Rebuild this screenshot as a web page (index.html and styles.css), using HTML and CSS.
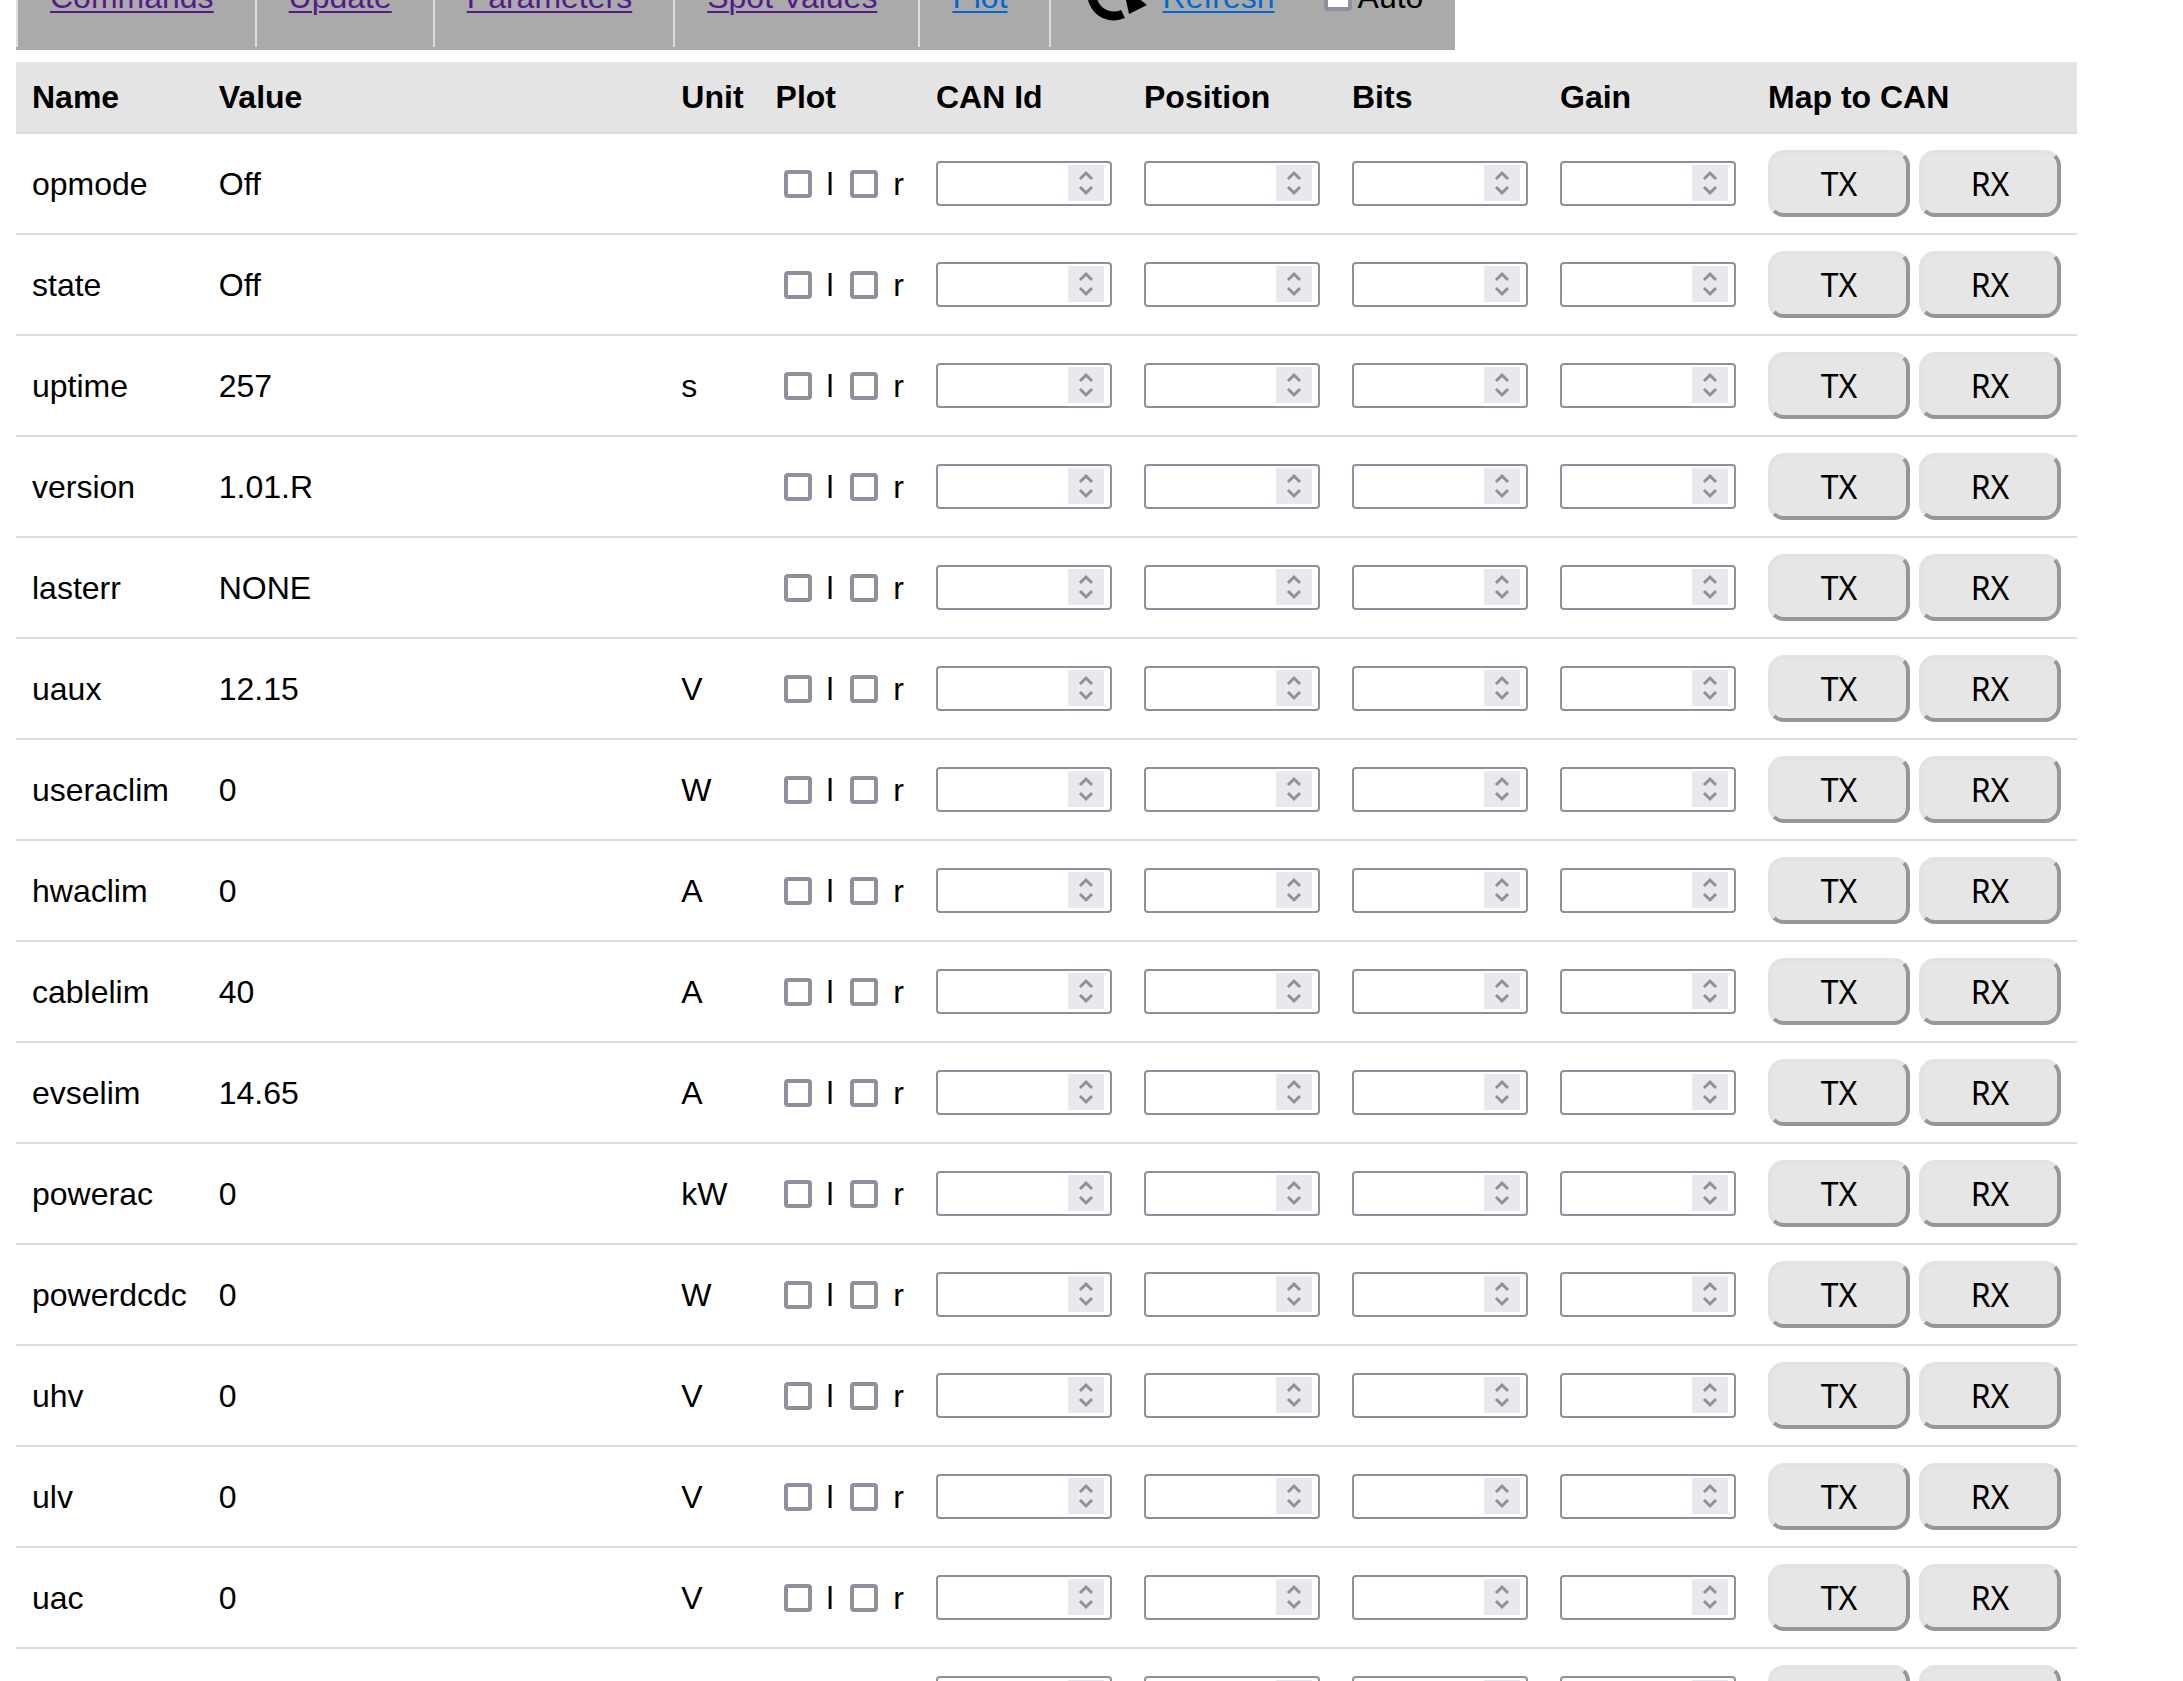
FILE: index.html
```html
<!DOCTYPE html>
<html lang="en">
<head>
    <meta charset="UTF-8">
    <meta name="viewport" content="width=device-width, initial-scale=1.0">
    <title>Spot Values</title>
    <link rel="stylesheet" href="styles.css">
</head>
<body>
    <!-- Navigation -->
    <nav class="navbar">
        <div class="nav-item"><a class="visited" href="#commands">Commands</a></div>
        <div class="nav-item"><a class="visited" href="#update">Update</a></div>
        <div class="nav-item"><a class="visited" href="#parameters">Parameters</a></div>
        <div class="nav-item"><a class="visited" href="#spotvalues">Spot Values</a></div>
        <div class="nav-item"><a href="#plot">Plot</a></div>
        <div class="nav-item refresh">
            <svg class="refresh-icon" viewBox="0 0 64 64" aria-hidden="true">
                <path d="M40 49 A22 22 0 1 1 46 13" fill="none" stroke="#000" stroke-width="9"/>
                <path d="M40 21 L64 40 L46 49 Z"/>
            </svg>
            <a href="#refresh">Refresh</a>
            <label class="auto"><input type="checkbox">Auto</label>
        </div>
    </nav>

    <!-- Spot Values -->
    <main class="content">
        <table class="spot-table">
            <thead>
                <tr>
                    <th>Name</th>
                    <th class="value">Value</th>
                    <th>Unit</th>
                    <th>Plot</th>
                    <th>CAN Id</th>
                    <th>Position</th>
                    <th>Bits</th>
                    <th>Gain</th>
                    <th>Map to CAN</th>
                </tr>
            </thead>
            <tbody id="spotValues"></tbody>
        </table>
    </main>

    <script>
        const spotValues = [
            ['opmode', 'Off', ''],
            ['state', 'Off', ''],
            ['uptime', '257', 's'],
            ['version', '1.01.R', ''],
            ['lasterr', 'NONE', ''],
            ['uaux', '12.15', 'V'],
            ['useraclim', '0', 'W'],
            ['hwaclim', '0', 'A'],
            ['cablelim', '40', 'A'],
            ['evselim', '14.65', 'A'],
            ['powerac', '0', 'kW'],
            ['powerdcdc', '0', 'W'],
            ['uhv', '0', 'V'],
            ['ulv', '0', 'V'],
            ['uac', '0', 'V'],
            ['', '', '']
        ];

        const canFields = ['CAN Id', 'Position', 'Bits', 'Gain'];

        function buildRow([name, value, unit]) {
            const inputs = canFields.map(field => `<td><input type="number" aria-label="${field}"></td>`).join('');
            return `<tr>
                <td>${name}</td>
                <td>${value}</td>
                <td>${unit}</td>
                <td><label><input type="checkbox"> l</label> <label><input type="checkbox"> r</label></td>
                ${inputs}
                <td class="map"><button type="button">TX</button> <button type="button">RX</button></td>
            </tr>`;
        }

        document.getElementById('spotValues').innerHTML = spotValues.map(buildRow).join('');
    </script>
</body>
</html>
```
FILE: styles.css
```css
/* Global Styles */
* {
    box-sizing: border-box;
}
html {
    overflow: hidden;
}
body {
    margin: 0 16px;
    font-family: 'Liberation Sans', Arial, sans-serif;
    font-size: 32px;
    line-height: 38px;
    color: #000;
    background: #fff;
}

/* Navigation */
.navbar {
    display: flex;
    gap: 9px;
    width: fit-content;
    margin-top: -60px;
    padding-bottom: 3px;
    background: #aaa;
}
.nav-item {
    padding: 38px 32px 31px;
    border-left: 2px solid #ddd;
}
a {
    color: #0067d6;
    text-decoration-thickness: 2px;
    text-underline-offset: 3px;
}
a.visited {
    color: #551a8b;
}
.refresh {
    display: flex;
    align-items: center;
}
.refresh-icon {
    width: 64px;
    height: 64px;
    margin: -13px 16px -13px 0;
}
.auto {
    display: flex;
    align-items: center;
    margin-left: 41px;
}

/* Table */
.content {
    margin: 12px 90px 0 0;
}
.spot-table {
    width: 100%;
    border-spacing: 0;
}
th, td {
    padding: 16px;
    text-align: left;
    white-space: nowrap;
    border-bottom: 2px solid #ddd;
}
th {
    background: #e4e4e4;
}
.value {
    width: 100%;
}

/* Inputs */
input[type="checkbox"] {
    appearance: none;
    width: 28px;
    height: 28px;
    margin: 0 6px 0 8px;
    vertical-align: -3px;
    background: #fff;
    border: 4px solid #8f8f9d;
    border-radius: 4px;
}
input[type="number"] {
    display: block;
    width: 176px;
    height: 45px;
    padding: 3px 6px;
    font: inherit;
    background: #fff;
    border: 2px solid #8f8f9d;
    border-radius: 4px;
}
input[type="number"]::-webkit-inner-spin-button {
    appearance: none;
    width: 36px;
    height: 36px;
    opacity: 1;
    background: #e9e9ed url("data:image/svg+xml,%3Csvg xmlns='http://www.w3.org/2000/svg' width='36' height='36' fill='none' stroke='%238f8f9d' stroke-width='3'%3E%3Cpath d='M12 14 18 8 24 14M12 22 18 28 24 22'/%3E%3C/svg%3E") no-repeat;
}

/* Buttons */
.map {
    font-size: 0;
}
button {
    width: 142px;
    height: 67px;
    font-family: 'Noto Sans', 'Open Sans', sans-serif;
    font-size: 32px;
    color: #000;
    background: #e6e6e6;
    border: 4px solid;
    border-color: #e3e3e3 #979797 #979797 #e3e3e3;
    border-radius: 16px;
    vertical-align: top;
}
button + button {
    margin-left: 9px;
}
```
